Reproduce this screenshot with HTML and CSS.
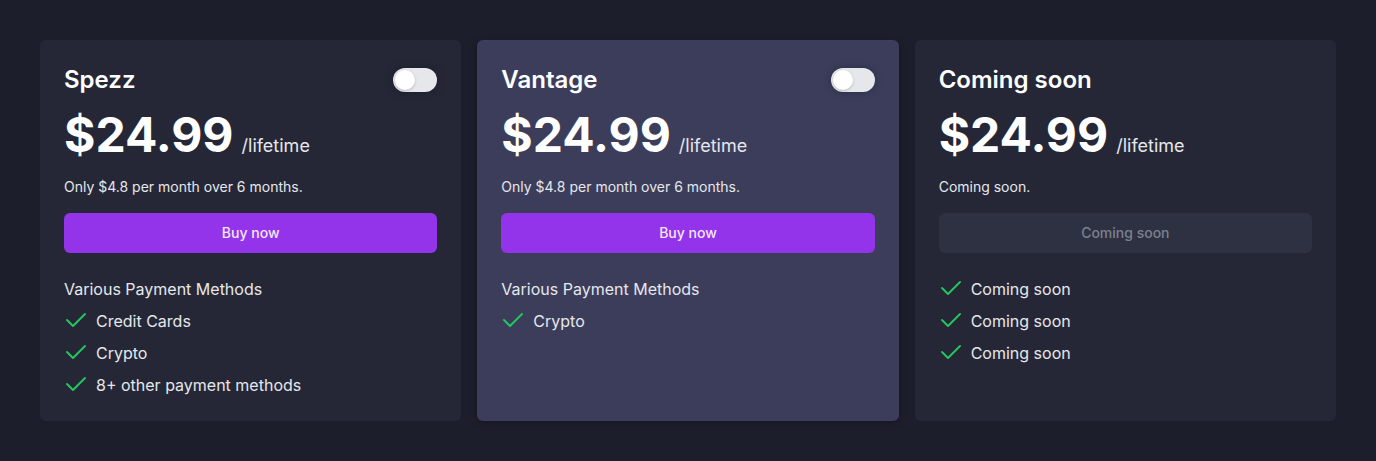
FILE: index.html
```html
<!DOCTYPE html>
<html lang="en">
<head>
<meta charset="utf-8">
<title>Pricing</title>
<link rel="stylesheet" href="styles.css">
</head>
<body>
<main class="plans">
  <section class="card">
    <div class="card-head">
      <h2 class="plan-name">Spezz</h2>
      <span class="toggle"><span class="knob"></span></span>
    </div>
    <div class="price-row"><span class="price">$24.99</span><span class="period">/lifetime</span></div>
    <p class="desc">Only $4.8 per month over 6 months.</p>
    <button class="btn">Buy now</button>
    <div class="features">
      <div class="feat-title">Various Payment Methods</div>
      <div class="feat"><svg class="check" viewBox="0 0 24 24"><path d="M3 11l6 6L21 5"/></svg><span>Credit Cards</span></div>
      <div class="feat"><svg class="check" viewBox="0 0 24 24"><path d="M3 11l6 6L21 5"/></svg><span>Crypto</span></div>
      <div class="feat"><svg class="check" viewBox="0 0 24 24"><path d="M3 11l6 6L21 5"/></svg><span>8+ other payment methods</span></div>
    </div>
  </section>
  <section class="card card-active">
    <div class="card-head">
      <h2 class="plan-name">Vantage</h2>
      <span class="toggle"><span class="knob"></span></span>
    </div>
    <div class="price-row"><span class="price">$24.99</span><span class="period">/lifetime</span></div>
    <p class="desc">Only $4.8 per month over 6 months.</p>
    <button class="btn">Buy now</button>
    <div class="features">
      <div class="feat-title">Various Payment Methods</div>
      <div class="feat"><svg class="check" viewBox="0 0 24 24"><path d="M3 11l6 6L21 5"/></svg><span>Crypto</span></div>
    </div>
  </section>
  <section class="card">
    <div class="card-head">
      <h2 class="plan-name">Coming soon</h2>
    </div>
    <div class="price-row"><span class="price">$24.99</span><span class="period">/lifetime</span></div>
    <p class="desc">Coming soon.</p>
    <button class="btn btn-disabled" disabled>Coming soon</button>
    <div class="features">
      <div class="feat"><svg class="check" viewBox="0 0 24 24"><path d="M3 11l6 6L21 5"/></svg><span>Coming soon</span></div>
      <div class="feat"><svg class="check" viewBox="0 0 24 24"><path d="M3 11l6 6L21 5"/></svg><span>Coming soon</span></div>
      <div class="feat"><svg class="check" viewBox="0 0 24 24"><path d="M3 11l6 6L21 5"/></svg><span>Coming soon</span></div>
    </div>
  </section>
</main>
</body>
</html>
```
FILE: styles.css
```css
* { box-sizing: border-box; }
html, body {
  margin: 0;
  background: #1d1e2b;
  font-family: Inter, "Noto Sans", sans-serif;
  color: #e5e7eb;
}
.plans {
  display: flex;
  gap: 16px;
  padding: 40px;
  align-items: flex-start;
}
.card {
  flex: 1 1 0;
  min-width: 0;
  height: 381px;
  background: #252737;
  border-radius: 6px;
  padding: 24px;
  display: flex;
  flex-direction: column;
}
.card-active {
  background: #3b3d5b;
  box-shadow: 0 2px 6px rgba(0, 0, 0, 0.25);
}
.card-head {
  display: flex;
  align-items: center;
  justify-content: space-between;
  height: 32px;
}
.plan-name {
  margin: 0;
  font-size: 24px;
  line-height: 32px;
  font-weight: 600;
  color: #ffffff;
}
.toggle {
  width: 44px;
  height: 24px;
  border-radius: 12px;
  background: #e5e7eb;
  padding: 2px;
  display: flex;
  box-shadow: 0 0 8px rgba(0, 0, 0, 0.25);
}
.knob {
  width: 20px;
  height: 20px;
  border-radius: 50%;
  background: #ffffff;
  box-shadow: 0 1px 3px rgba(0, 0, 0, 0.2);
}
.price-row {
  display: flex;
  align-items: baseline;
  gap: 8px;
  margin-top: 15px;
}
.price {
  font-size: 48px;
  line-height: 1;
  font-weight: 700;
  color: #ffffff;
}
.period {
  font-size: 18px;
  line-height: 28px;
  color: #e5e7eb;
}
.desc {
  margin: 17px 0 0;
  font-size: 14px;
  line-height: 20px;
  color: #e5e7eb;
}
.btn {
  margin-top: 16px;
  height: 40px;
  width: 100%;
  border: 0;
  border-radius: 6px;
  padding: 0;
  line-height: 20px;
  background: #9333ea;
  color: #f3e8ff;
  font-family: inherit;
  font-size: 14px;
  font-weight: 500;
}
.btn-disabled {
  background: #2d3142;
  color: #7c8190;
}
.features {
  margin-top: 24px;
  display: flex;
  flex-direction: column;
  gap: 8px;
}
.feat-title, .feat {
  font-size: 16px;
  line-height: 24px;
  color: #e5e7eb;
}
.feat {
  display: flex;
  align-items: center;
  gap: 8px;
}
.check {
  width: 24px;
  height: 24px;
  flex: none;
  fill: none;
  stroke: #22c55e;
  stroke-width: 2;
  stroke-linecap: round;
  stroke-linejoin: round;
}
```
